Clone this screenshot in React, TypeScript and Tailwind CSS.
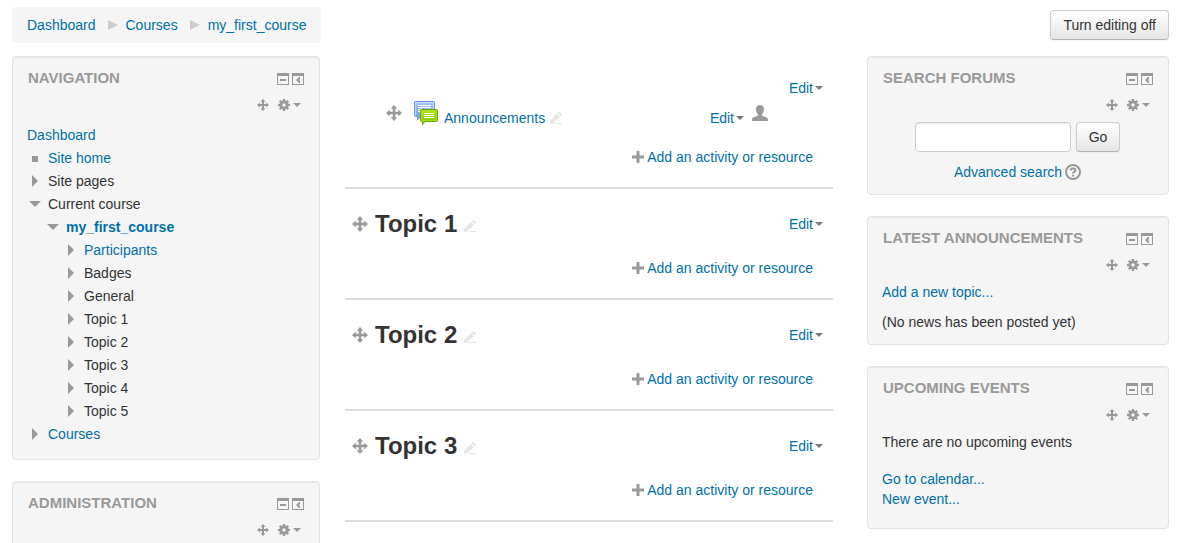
import React from 'react';

type TreeItem = {
  label: string;
  level: 0 | 1 | 2;
  marker: 'square' | 'closed' | 'open';
  link?: boolean;
  current?: boolean;
};

const treeItems: TreeItem[] = [
  { label: 'Site home', level: 0, marker: 'square', link: true },
  { label: 'Site pages', level: 0, marker: 'closed' },
  { label: 'Current course', level: 0, marker: 'open' },
  { label: 'my_first_course', level: 1, marker: 'open', link: true, current: true },
  { label: 'Participants', level: 2, marker: 'closed', link: true },
  { label: 'Badges', level: 2, marker: 'closed' },
  { label: 'General', level: 2, marker: 'closed' },
  { label: 'Topic 1', level: 2, marker: 'closed' },
  { label: 'Topic 2', level: 2, marker: 'closed' },
  { label: 'Topic 3', level: 2, marker: 'closed' },
  { label: 'Topic 4', level: 2, marker: 'closed' },
  { label: 'Topic 5', level: 2, marker: 'closed' },
  { label: 'Courses', level: 0, marker: 'closed', link: true },
];

const indents = ['pl-0', 'pl-[18px]', 'pl-[36px]'];

const topics = ['Topic 1', 'Topic 2', 'Topic 3'];

const Link = ({ children, className = '' }: { children: React.ReactNode; className?: string }) => (
  <a href="#" className={`text-[#0070a8] hover:underline ${className}`}>{children}</a>
);

const MoveIcon = ({ size = 16 }: { size?: number }) => (
  <svg width={size} height={size} viewBox="0 0 16 16" fill="#999" className="shrink-0">
    <path d="M8 0l3.400 3.800H9.300v2.900h2.900V4.600L16 8l-3.800 3.400V9.300H9.300v2.900h2.100L8 16l-3.400-3.800h2.100V9.300H3.800v2.100L0 8l3.800-3.400v2.100h2.900V3.800H4.600z" />
  </svg>
);

const GearIcon = () => (
  <svg width="12" height="12" viewBox="0 0 12 12" fill="#999" className="shrink-0">
    <path d="M4.800 0h2.400v12H4.800zM0 4.800h12v2.400H0z" />
    <path d="M4.800 0h2.400v12H4.800zM0 4.800h12v2.400H0z" transform="rotate(45 6 6)" />
    <circle cx="6" cy="6" r="4.400" />
    <circle cx="6" cy="6" r="1.700" fill="#f5f5f5" />
  </svg>
);

const Caret = ({ color = '#777' }: { color?: string }) => (
  <svg width="8" height="4" viewBox="0 0 8 4" fill={color} className="shrink-0">
    <path d="M0 0h8L4 4z" />
  </svg>
);

const PencilIcon = () => (
  <svg width="12" height="12" viewBox="0 0 12 12" fill="#e6e6e6" className="shrink-0">
    <path d="M0 8.700L6.700 2l3 3L3.200 11.500H0zM7.500 1.300L8.700.2q.7-.4 1.300 0l1.700 1.700q.5.700 0 1.300l-1.200 1.100zM5 11h7v1H5z" />
  </svg>
);

const PlusIcon = () => (
  <svg width="12" height="12" viewBox="0 0 12 12" fill="#999" className="shrink-0">
    <path d="M4.500 0h3v4.500H12v3H7.500V12h-3V7.500H0v-3h4.500z" />
  </svg>
);

const UserIcon = () => (
  <svg width="16" height="16" viewBox="0 0 16 16" fill="#999" className="block">
    <path d="M8 0c2.600 0 4 1.800 4 4.200 0 2-.8 3.900-2 5v1.200c0 .9 6 1.300 6 4V16H0v-1.600c0-2.700 6-3.100 6-4V9.200c-1.200-1.100-2-3-2-5C4 1.800 5.400 0 8 0z" />
  </svg>
);

const HelpIcon = () => (
  <svg width="16" height="16" viewBox="0 0 16 16" fill="none" stroke="#999" strokeWidth="2" className="block">
    <circle cx="8" cy="8" r="7" />
    <path d="M5.600 6.600c0-1.500 1-2.200 2.400-2.200s2.400.8 2.400 2c0 1.600-2.400 1.500-2.400 3.200M8 10.800v1.800" />
  </svg>
);

const ForumIcon = () => (
  <svg width="24" height="24" viewBox="0 0 24 24" className="shrink-0">
    <defs>
      <linearGradient id="forum-blue" x2="0" y2="1">
        <stop stopColor="#a9c8fb" />
        <stop offset="1" stopColor="#6f9bec" />
      </linearGradient>
      <linearGradient id="forum-green" x2="0" y2="1">
        <stop stopColor="#b4e80c" />
        <stop offset="1" stopColor="#86c506" />
      </linearGradient>
    </defs>
    <path d="M1.500.5h18q1 0 1 1v13q0 1-1 1H6L3.500 19v-3.500h-2q-1 0-1-1v-13q0-1 1-1z" fill="url(#forum-blue)" stroke="#6b94e4" />
    <path d="M1.500 14.500v-13h18v8" fill="none" stroke="#c2d9ff" />
    <path d="M4 4.500h13M4 6.500h13M4 8.500h3M4 10.500h2" stroke="#fff" />
    <path d="M7.500 8.500h15q1 0 1 1v10q0 1-1 1H11L8.500 23.500v-3h-1q-1 0-1-1v-10q0-1 1-1z" fill="url(#forum-green)" stroke="#69a80c" />
    <path d="M7.500 19.500v-10h15v10z" fill="none" stroke="#a9de20" />
    <path d="M10 12.500h10M10 14.500h10M10 16.500h10" stroke="#fff" />
  </svg>
);

const Marker = ({ kind }: { kind: TreeItem['marker'] }) => (
  <svg width="16" height="16" viewBox="0 0 16 16" fill="#999" className="shrink-0">
    {kind === 'square' && <rect x="5" y="5" width="6" height="6" />}
    {kind === 'closed' && <path d="M5 1v12l6-6z" />}
    {kind === 'open' && <path d="M2 4h12l-6 6z" />}
  </svg>
);

const Block = ({ title, className, children }: { title: string; className: string; children?: React.ReactNode }) => (
  <section className={`rounded border border-[#e3e3e3] bg-[#f5f5f5] pt-[11px] pr-[15px] pl-[14px] shadow-[inset_0_1px_1px_rgba(0,0,0,0.05)] ${className}`}>
    <div className="flex h-5 items-center justify-between pl-px">
      <h2 className="text-[15px] leading-5 font-bold text-[#999] uppercase">{title}</h2>
      <div className="flex gap-[3px] pt-[2px]">
        <button type="button" aria-label={`Hide ${title} block`}>
          <svg width="12" height="12" viewBox="0 0 12 12" fill="#999" className="block">
            <path fillRule="evenodd" d="M0 0h12v12H0zM1 3v8h10V3z" />
            <path d="M3 6h6v2H3z" />
          </svg>
        </button>
        <button type="button" aria-label={`Dock ${title} block`}>
          <svg width="12" height="12" viewBox="0 0 12 12" fill="#999" className="block">
            <path fillRule="evenodd" d="M0 0h12v12H0zM1 3v8h10V3z" />
            <path d="M8 4v2L7 7l1 1v2H7L4 7l3-3z" />
          </svg>
        </button>
      </div>
    </div>
    <div className="mt-[7px] flex h-5 items-center justify-end gap-[9px] pr-[3px]">
      <button type="button" aria-label={`Move ${title} block`}>
        <MoveIcon size={12} />
      </button>
      <button type="button" aria-label={`${title} actions`} className="flex items-center gap-[3px]">
        <GearIcon />
        <Caret color="#999" />
      </button>
    </div>
    <div className="mt-[7px]">{children}</div>
  </section>
);

const EditMenu = () => (
  <Link className="flex items-center gap-[2px]">
    Edit
    <Caret />
  </Link>
);

const AddActivity = () => (
  <div className="mt-[19px] flex justify-end pr-[10px]">
    <Link className="flex items-center gap-[3px]">
      <PlusIcon />
      Add an activity or resource
    </Link>
  </div>
);

const buttonClass =
  'h-[30px] rounded border border-[#ccc] border-b-[#b3b3b3] bg-linear-to-b from-white to-[#e6e6e6] px-3 text-[#333] shadow-[0_1px_2px_rgba(0,0,0,0.05)]';

const Separator = () => (
  <svg width="10" height="10" viewBox="0 0 10 10" fill="#ccc" className="mr-2 ml-3">
    <path d="M0 0v10l10-5z" />
  </svg>
);

const App: React.FC = () => {
  return (
    <div className="bg-white pt-[7px] pr-[9px] pl-3 font-['Liberation_Sans',Arial,sans-serif] text-sm leading-5 text-[#333]">
      <header className="mb-[13px] flex items-center justify-between">
        <nav aria-label="Breadcrumb" className="flex h-9 items-center rounded bg-[#f5f5f5] px-[15px]">
          <Link>Dashboard</Link>
          <Separator />
          <Link>Courses</Link>
          <Separator />
          <Link>my_first_course</Link>
        </nav>
        <button type="button" className={buttonClass}>Turn editing off</button>
      </header>

      <div className="grid grid-cols-[308fr_497fr_302fr] items-start gap-[25px]">
        <aside className="flex flex-col gap-[21px]">
          <Block title="Navigation" className="pb-[13px]">
            <ul className="pt-[2px] leading-[23px]">
              <li><Link>Dashboard</Link></li>
              {treeItems.map((item) => (
                <li key={item.label} className={`flex items-center gap-[5px] ${indents[item.level]}`}>
                  <Marker kind={item.marker} />
                  {item.link ? <Link className={item.current ? 'font-bold' : ''}>{item.label}</Link> : <span>{item.label}</span>}
                </li>
              ))}
            </ul>
          </Block>
          <Block title="Administration" className="pb-[13px]" />
        </aside>

        <main className="pr-[9px]">
          <section className="border-b-2 border-[#ddd] pt-[22px] pr-[10px] pb-5">
            <div className="flex justify-end">
              <EditMenu />
            </div>
            <div className="flex h-[30px] items-center pr-[55px] pl-[41px]">
              <MoveIcon />
              <div className="ml-3 flex flex-1 items-center">
                <ForumIcon />
                <div className="ml-[6px] flex items-center gap-[5px] pt-[10px]">
                  <Link>Announcements</Link>
                  <PencilIcon />
                </div>
              </div>
              <div className="flex items-center gap-2">
                <div className="pt-[10px]"><EditMenu /></div>
                <button type="button" aria-label="Assign roles"><UserIcon /></button>
              </div>
            </div>
            <AddActivity />
          </section>

          {topics.map((topic) => (
            <section key={topic} className="border-b-2 border-[#ddd] pt-5 pr-[10px] pb-5 pl-[7px]">
              <div className="flex h-[30px] items-center justify-between">
                <div className="flex items-center gap-[7px]">
                  <MoveIcon />
                  <h3 className="text-2xl leading-[30px] font-bold">{topic}</h3>
                  <a href="#" aria-label={`Edit ${topic} name`} className="pt-1"><PencilIcon /></a>
                </div>
                <EditMenu />
              </div>
              <AddActivity />
            </section>
          ))}
        </main>

        <aside className="flex flex-col gap-[21px]">
          <Block title="Search forums" className="pb-3">
            <form className="flex justify-center gap-[5px]">
              <input
                type="text"
                aria-label="Search forums"
                className="h-[30px] w-[156px] rounded border border-[#ccc] bg-white px-[6px] shadow-[inset_0_1px_1px_rgba(0,0,0,0.075)]"
              />
              <button type="button" className={buttonClass}>Go</button>
            </form>
            <div className="mt-[10px] flex items-center justify-center gap-[3px]">
              <Link>Advanced search</Link>
              <button type="button" aria-label="Help with search"><HelpIcon /></button>
            </div>
          </Block>
          <Block title="Latest announcements" className="pb-3">
            <p className="mb-[10px]"><Link>Add a new topic...</Link></p>
            <p>(No news has been posted yet)</p>
          </Block>
          <Block title="Upcoming events" className="pb-[19px]">
            <p className="mb-[17px]">There are no upcoming events</p>
            <p><Link>Go to calendar...</Link></p>
            <p><Link>New event...</Link></p>
          </Block>
        </aside>
      </div>
    </div>
  );
};

export default App;
